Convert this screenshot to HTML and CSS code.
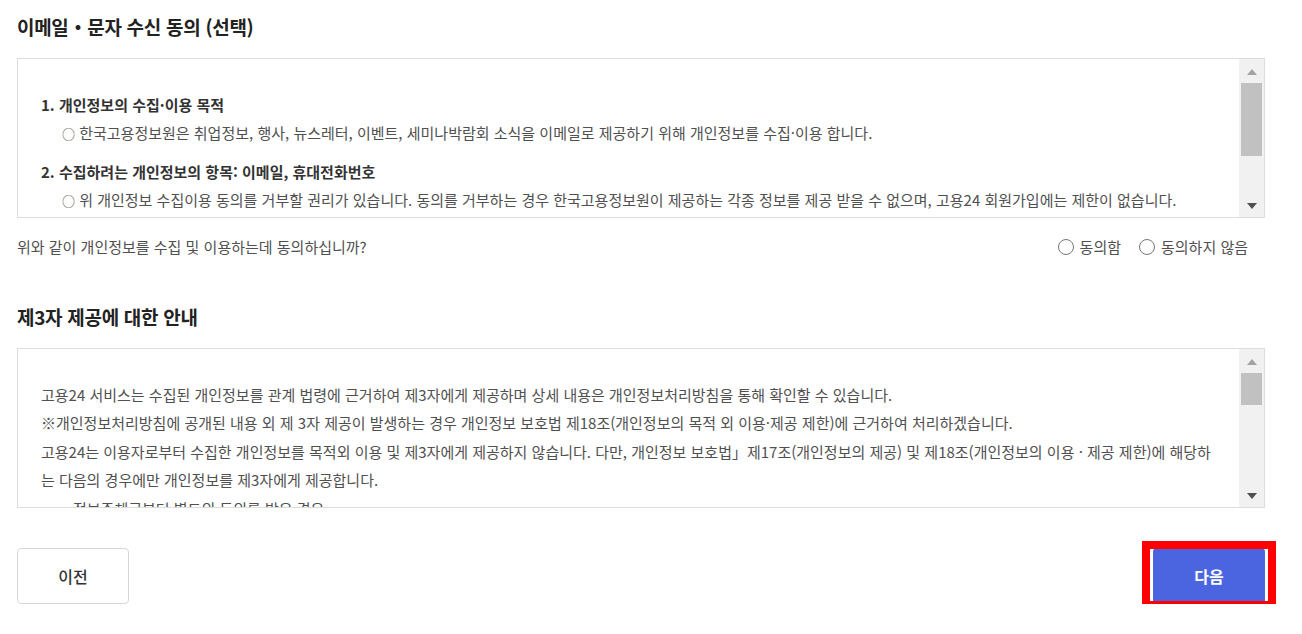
FILE: index.html
```html
<!DOCTYPE html>
<html lang="ko">
<head>
  <meta charset="UTF-8">
  <meta name="viewport" content="width=device-width, initial-scale=1.0">
  <title>약관 동의</title>
  <link rel="stylesheet" href="styles.css">
</head>
<body>
  <div class="page">
    <h2 class="sec-title">이메일・문자 수신 동의 (선택)</h2>
    <div class="terms-box">
      <div class="terms-body">
        <div class="item">
          <p class="item-title">1. 개인정보의 수집·이용 목적</p>
          <p class="item-sub"><span class="bullet">○</span> 한국고용정보원은 취업정보, 행사, 뉴스레터, 이벤트, 세미나박람회 소식을 이메일로 제공하기 위해 개인정보를 수집·이용 합니다.</p>
        </div>
        <div class="item">
          <p class="item-title">2. 수집하려는 개인정보의 항목: 이메일, 휴대전화번호</p>
          <p class="item-sub"><span class="bullet">○</span> 위 개인정보 수집이용 동의를 거부할 권리가 있습니다. 동의를 거부하는 경우 한국고용정보원이 제공하는 각종 정보를 제공 받을 수 없으며, 고용24 회원가입에는 제한이 없습니다.</p>
        </div>
      </div>
      <div class="fake-scroll">
        <span class="arrow up"></span>
        <span class="thumb thumb-1"></span>
        <span class="arrow down"></span>
      </div>
    </div>
    <div class="agree-row">
      <span class="agree-q">위와 같이 개인정보를 수집 및 이용하는데 동의하십니까?</span>
      <div class="radios">
        <label class="radio"><span class="circle"></span>동의함</label>
        <label class="radio"><span class="circle"></span>동의하지 않음</label>
      </div>
    </div>

    <h2 class="sec-title sec-2">제3자 제공에 대한 안내</h2>
    <div class="terms-box">
      <div class="terms-body plain">
        <p>고용24 서비스는 수집된 개인정보를 관계 법령에 근거하여 제3자에게 제공하며 상세 내용은 개인정보처리방침을 통해 확인할 수 있습니다.</p>
        <p>※개인정보처리방침에 공개된 내용 외 제 3자 제공이 발생하는 경우 개인정보 보호법 제18조(개인정보의 목적 외 이용·제공 제한)에 근거하여 처리하겠습니다.</p>
        <p>고용24는 이용자로부터 수집한 개인정보를 목적외 이용 및 제3자에게 제공하지 않습니다. 다만, 개인정보 보호법」제17조(개인정보의 제공) 및 제18조(개인정보의 이용 · 제공 제한)에 해당하는 다음의 경우에만 개인정보를 제3자에게 제공합니다.</p>
        <p class="indent">정보주체로부터 별도의 동의를 받은 경우</p>
      </div>
      <div class="fake-scroll">
        <span class="arrow up"></span>
        <span class="thumb thumb-2"></span>
        <span class="arrow down"></span>
      </div>
    </div>

    <div class="btn-row">
      <button class="btn btn-prev">이전</button>
      <div class="btn-wrap">
        <button class="btn btn-next">다음</button>
        <span class="highlight"></span>
      </div>
    </div>
  </div>
</body>
</html>
```

FILE: styles.css
```css
* { box-sizing: border-box; }
html, body { margin: 0; padding: 0; background: #fff; }
body {
  font-family: "Noto Sans CJK KR", "Noto Sans", sans-serif;
  color: #505050;
  font-size: 15px;
}
p { margin: 0; }

.page {
  width: 1248px;
  margin-left: 17px;
  padding-top: 13px;
}

.sec-title {
  margin: 0;
  font-size: 19px;
  line-height: 28px;
  font-weight: 700;
  color: #222;
  letter-spacing: -0.3px;
}
.sec-2 { margin-top: 46px; }

.terms-box {
  margin-top: 17px;
  height: 160px;
  border: 1px solid #ddd;
  display: flex;
  background: #fff;
}
.terms-body {
  flex: 1;
  overflow: hidden;
  padding: 32px 20px 0 23px;
  line-height: 28px;
}
.item + .item { margin-top: 10px; }
.item-title { font-weight: 700; color: #333; }
.item-sub { padding-left: 21px; }
.bullet { font-size: 13px; }
.terms-body.plain {
  padding-top: 32px;
  padding-right: 24px;
  word-break: break-all;
}
.terms-body.plain p { line-height: 28.4px; }
.terms-body .indent { padding-left: 32px; }

.fake-scroll {
  width: 25px;
  background: #f1f1f1;
  display: flex;
  flex-direction: column;
  align-items: center;
  padding: 10px 0 8px;
}
.arrow {
  width: 0;
  height: 0;
  border-left: 5px solid transparent;
  border-right: 5px solid transparent;
}
.arrow.up { border-bottom: 6px solid #a3a3a3; }
.arrow.down { border-top: 6px solid #505050; margin-top: auto; }
.thumb {
  width: 21px;
  background: #c1c1c1;
  margin-top: 8px;
}
.thumb-1 { height: 73px; }
.thumb-2 { height: 32px; }

.agree-row {
  margin-top: 19px;
  display: flex;
  justify-content: space-between;
  align-items: center;
  line-height: 20px;
}
.radios { display: flex; gap: 18px; padding-right: 17px; }
.radio { display: flex; align-items: center; gap: 6px; }
.circle {
  width: 16px;
  height: 16px;
  border: 1px solid #767676;
  border-radius: 50%;
  background: #fff;
}

.btn-row {
  margin-top: 40px;
  display: flex;
  justify-content: space-between;
}
.btn {
  width: 112px;
  height: 56px;
  border-radius: 4px;
  font-family: inherit;
  font-size: 16px;
  font-weight: 700;
}
.btn-prev {
  background: #fff;
  border: 1px solid #d6d6d6;
  color: #333;
  font-weight: 500;
}
.btn-next {
  background: #4b65e0;
  border: none;
  color: #fff;
}
.btn-wrap { position: relative; }
.highlight {
  position: absolute;
  top: -7px;
  bottom: -5px;
  left: -11px;
  right: -11px;
  border: 8px solid #ff0000;
  pointer-events: none;
}
```
